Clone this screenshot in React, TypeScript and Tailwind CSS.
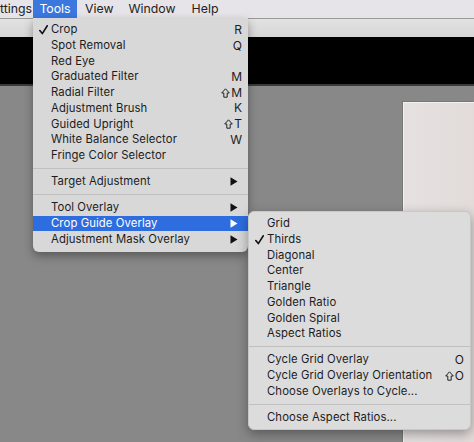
import React from 'react';

type Item =
  | { sep: true }
  | { sep?: false; label: string; key?: string; shift?: boolean; check?: boolean; sub?: boolean; active?: boolean };

const toolsItems: Item[] = [
  { label: 'Crop', key: 'R', check: true },
  { label: 'Spot Removal', key: 'Q' },
  { label: 'Red Eye' },
  { label: 'Graduated Filter', key: 'M' },
  { label: 'Radial Filter', key: 'M', shift: true },
  { label: 'Adjustment Brush', key: 'K' },
  { label: 'Guided Upright', key: 'T', shift: true },
  { label: 'White Balance Selector', key: 'W' },
  { label: 'Fringe Color Selector' },
  { sep: true },
  { label: 'Target Adjustment', sub: true },
  { sep: true },
  { label: 'Tool Overlay', sub: true },
  { label: 'Crop Guide Overlay', sub: true, active: true },
  { label: 'Adjustment Mask Overlay', sub: true }
];

const guideItems: Item[] = [
  { label: 'Grid' },
  { label: 'Thirds', check: true },
  { label: 'Diagonal' },
  { label: 'Center' },
  { label: 'Triangle' },
  { label: 'Golden Ratio' },
  { label: 'Golden Spiral' },
  { label: 'Aspect Ratios' },
  { sep: true },
  { label: 'Cycle Grid Overlay', key: 'O' },
  { label: 'Cycle Grid Overlay Orientation', key: 'O', shift: true },
  { label: 'Choose Overlays to Cycle...' },
  { sep: true },
  { label: 'Choose Aspect Ratios...' }
];

const Check = () => (
  <svg width="9" height="10" viewBox="0 0 9 10">
    <path d="M0.8 5.6 L3.3 8.6 L8.3 0.8" fill="none" stroke="#111" strokeWidth="1.6" strokeLinecap="round" strokeLinejoin="round" />
  </svg>
);

const Shift = () => (
  <svg width="9" height="10" viewBox="0 0 9 10" className="mr-[1px]">
    <path d="M4.5 0.8 L8.3 5 L6.2 5 L6.2 9.2 L2.8 9.2 L2.8 5 L0.7 5 Z" fill="none" stroke="#222" strokeWidth="1" strokeLinejoin="round" />
  </svg>
);

const MenuRows: React.FC<{ items: Item[] }> = ({ items }) => (
  <>
    {items.map((item, i) =>
      item.sep ? (
        <div key={i} className="h-[10.5px] flex items-center">
          <div className="w-full h-px bg-[#c0c0c0]" />
        </div>
      ) : (
        <div
          key={i}
          className={`h-[15.7px] flex items-center pl-[6px] pr-[6px] ${
            item.active ? 'bg-[#2e6de0] text-white' : 'text-[#1c1c1c]'
          }`}
        >
          <span className="w-[12px] flex items-center">{item.check && <Check />}</span>
          <span className="flex-1 whitespace-nowrap tracking-[0.1px]">{item.label}</span>
          {item.key && (
            <span className="flex items-center text-[12px]">
              {item.shift && <Shift />}
              {item.key}
            </span>
          )}
          {item.sub && (
            <svg width="8" height="9" viewBox="0 0 8 9" className="mr-[4px]">
              <path d="M0.5 0.3 L7.5 4.5 L0.5 8.7 Z" fill={item.active ? '#fff' : '#111'} />
            </svg>
          )}
        </div>
      )
    )}
  </>
);

export default function App() {
  return (
    <div
      className="relative w-[474px] h-[442px] overflow-hidden bg-[#888888] text-[11.3px]"
      style={{ fontFamily: 'Inter, "Liberation Sans", Arial, sans-serif' }}
    >
      {/* Menu bar */}
      <div className="h-[18px] bg-[#e6e4e8] flex items-center text-[12.3px] text-[#222]">
        <span className="w-[33px] whitespace-nowrap">ttings</span>
        <span className="h-full w-[44px] flex items-center justify-center bg-[#3a78e0] text-white">Tools</span>
        <span className="ml-[8px]">View</span>
        <span className="ml-[15px]">Window</span>
        <span className="ml-[16px]">Help</span>
      </div>
      {/* Toolbar */}
      <div className="h-[19px] bg-gradient-to-b from-[#e2e2e2] to-[#d6d6d6] border-t border-[#9a9a9a]" />
      {/* Black band */}
      <div className="h-[49px] bg-black border-b-2 border-[#3a3a3a]" />
      {/* Canvas */}
      <div className="flex pt-[16px] pl-[403px] h-full">
        <div className="flex-1 bg-gradient-to-r from-[#e5e1e0] to-[#e2dbd9] border-l border-t border-[#f2f2f2] shadow-[-1px_-1px_0_#777]" />
      </div>

      {/* Tools menu */}
      <div className="absolute left-[33px] top-[18px] w-[215px] pt-[4px] pb-[5px] bg-[#d8d8d8] rounded-b-[6px] shadow-[0_4px_10px_rgba(0,0,0,0.35)]">
        <MenuRows items={toolsItems} />
      </div>

      {/* Crop Guide Overlay submenu */}
      <div className="absolute left-[248px] top-[211px] w-[223px] pt-[4px] pb-[4px] bg-[#dcdcdc] rounded-[6px] shadow-[0_4px_12px_rgba(0,0,0,0.35)] border border-[#c8c8c8]">
        <MenuRows items={guideItems} />
      </div>
    </div>
  );
}
